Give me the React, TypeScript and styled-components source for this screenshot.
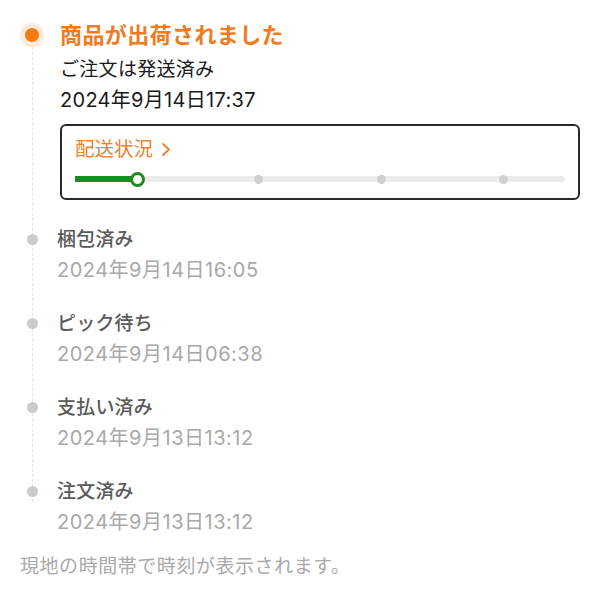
import React from "react";
import styled, { createGlobalStyle } from "styled-components";

const Global = createGlobalStyle`
  html, body { margin: 0; padding: 0; background: #fff; }
  body {
    font-family: "Inter", "Noto Sans CJK JP", sans-serif;
    -webkit-font-smoothing: antialiased;
  }
`;

const Page = styled.div`
  width: 600px;
  height: 595px;
  box-sizing: border-box;
  padding: 17px 20px 0 20px;
  overflow: hidden;
`;

const Timeline = styled.div`
  position: relative;
  &::before {
    content: "";
    position: absolute;
    left: 11.5px;
    top: 30px;
    bottom: 58px;
    border-left: 1px dashed #e2e2e2;
  }
`;

const Entry = styled.div<{ $gap: number; $pad: number }>`
  display: grid;
  grid-template-columns: ${(p) => p.$gap}px 1fr;
  padding-bottom: ${(p) => p.$pad}px;
  position: relative;
`;

const MarkerCol = styled.div<{ $h: number }>`
  display: flex;
  justify-content: center;
  align-items: center;
  width: 24px;
  height: ${(p) => p.$h}px;
`;

const Dot = styled.span`
  width: 11px;
  height: 11px;
  border-radius: 50%;
  background: #cbcbcb;
`;

const ActiveDot = styled.span`
  width: 14px;
  height: 14px;
  border-radius: 50%;
  background: #f57a14;
  box-shadow: 0 0 0 5px #feeadb;
`;

const Content = styled.div`
  display: flex;
  flex-direction: column;
`;

const Title = styled.div`
  font-size: 22px;
  line-height: 36px;
  height: 36px;
  font-weight: 600;
  color: #f07a20;
  letter-spacing: 0.4px;
`;

const Line = styled.div<{ $top?: number; $size?: number }>`
  font-size: ${(p) => p.$size ?? 19}px;
  line-height: 30px;
  color: #1a1a1a;
  margin-top: ${(p) => p.$top ?? 0}px;
  letter-spacing: 0.3px;
`;

const Card = styled.div`
  margin-top: 9px;
  box-sizing: border-box;
  width: 520px;
  height: 76px;
  border: 2px solid #2a2a2a;
  border-radius: 6px;
  padding: 9px 13px 0 13px;
`;

const CardLabel = styled.div`
  display: flex;
  align-items: center;
  gap: 8px;
  font-size: 19.5px;
  line-height: 28px;
  color: #e8832f;
`;

const Track = styled.div`
  position: relative;
  margin-top: 13px;
  height: 6px;
  width: 490px;
  background: #ececec;
  border-radius: 3px;
`;

const Fill = styled.div`
  position: absolute;
  left: 0;
  top: 0;
  height: 6px;
  background: #1f8a1f;
`;

const Knob = styled.span`
  position: absolute;
  top: 50%;
  width: 9px;
  height: 9px;
  margin: -7.5px 0 0 -7.5px;
  border: 3px solid #1f8a1f;
  background: #fff;
  border-radius: 50%;
`;

const Stop = styled.span`
  position: absolute;
  top: 50%;
  width: 9px;
  height: 9px;
  margin: -4.5px 0 0 -4.5px;
  background: #d0d0d0;
  border-radius: 50%;
`;

const Label = styled.div`
  font-size: 19px;
  line-height: 31px;
  color: #5a5a5a;
  font-weight: 500;
  letter-spacing: 0.2px;
`;

const Stamp = styled.div`
  font-size: 20px;
  line-height: 31px;
  color: #a8a8a8;
  letter-spacing: 0.5px;
`;

const Footer = styled.div`
  margin-top: -8px;
  font-size: 19px;
  line-height: 30px;
  color: #a9a9a9;
  letter-spacing: 0.55px;
`;

const Chevron = () => (
  <svg width="10" height="15" viewBox="0 0 10 15" fill="none">
    <path d="M2 2 L8 7.5 L2 13" stroke="#e8832f" strokeWidth="1.9" strokeLinecap="round" strokeLinejoin="round" />
  </svg>
);

const history = [
  { label: "梱包済み", time: "2024年9月14日16:05" },
  { label: "ピック待ち", time: "2024年9月14日06:38" },
  { label: "支払い済み", time: "2024年9月13日13:12" },
  { label: "注文済み", time: "2024年9月13日13:12" },
];

export default function App() {
  return (
    <>
      <Global />
      <Page>
        <Timeline>
          <Entry $gap={40} $pad={24}>
            <MarkerCol $h={36}>
              <ActiveDot />
            </MarkerCol>
            <Content>
              <Title>商品が出荷されました</Title>
              <Line $top={2}>ご注文は発送済み</Line>
              <Line $size={20}>2024年9月14日17:37</Line>
              <Card>
                <CardLabel>
                  配送状況 <Chevron />
                </CardLabel>
                <Track>
                  <Fill style={{ width: 62 }} />
                  <Knob style={{ left: 62 }} />
                  <Stop style={{ left: 183 }} />
                  <Stop style={{ left: 306 }} />
                  <Stop style={{ left: 428 }} />
                </Track>
              </Card>
            </Content>
          </Entry>
          {history.map((h) => (
            <Entry $gap={37} $pad={22} key={h.label + h.time}>
              <MarkerCol $h={31}>
                <Dot />
              </MarkerCol>
              <Content>
                <Label>{h.label}</Label>
                <Stamp>{h.time}</Stamp>
              </Content>
            </Entry>
          ))}
        </Timeline>
        <Footer>現地の時間帯で時刻が表示されます。</Footer>
      </Page>
    </>
  );
}
